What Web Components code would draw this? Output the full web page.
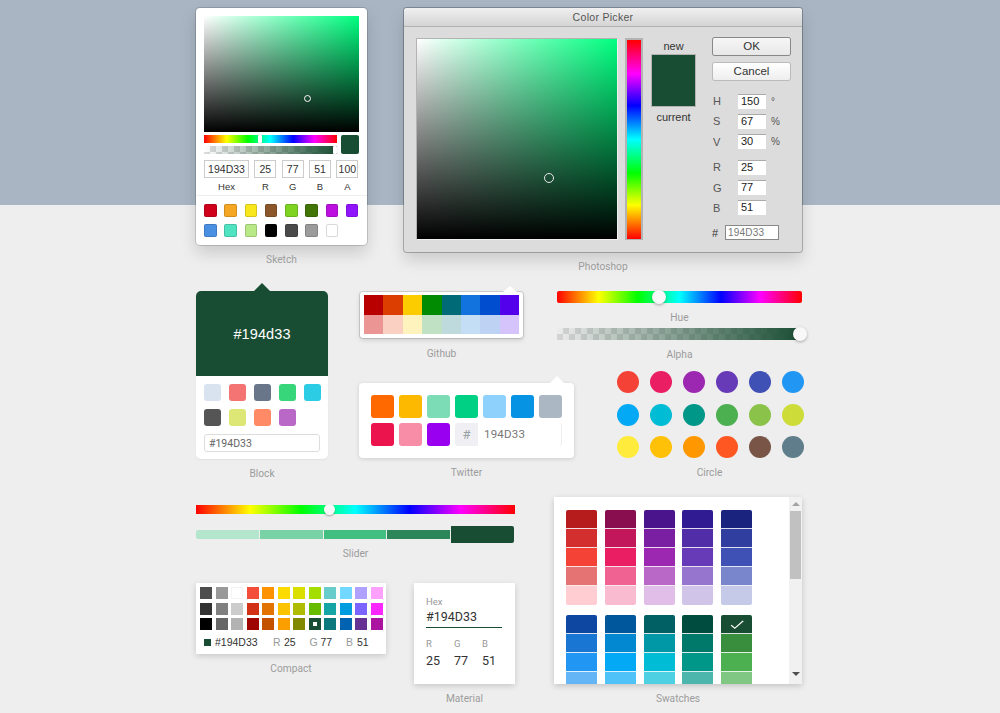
<!DOCTYPE html>
<html><head><meta charset="utf-8"><style>html,body{margin:0;padding:0}</style></head><body>
<cp-page></cp-page>
<script>
const hueH='linear-gradient(to right,#f00 0%,#ff0 17%,#0f0 33%,#0ff 50%,#00f 67%,#f0f 83%,#f00 100%)';
const hueV='linear-gradient(to top,#f00 0%,#ff0 17%,#0f0 33%,#0ff 50%,#00f 67%,#f0f 83%,#f00 100%)';
const sat='linear-gradient(to top,#000,rgba(0,0,0,0)),linear-gradient(to right,#fff,rgba(255,255,255,0)),#00ff80';
const check=(a,b,s)=>`repeating-conic-gradient(${a} 0 25%,${b} 0 50%) 0 0/${s}px ${s}px`;
function def(name,css,html){
  customElements.define(name,class extends HTMLElement{
    constructor(){super();const r=this.attachShadow({mode:'open'});
      r.innerHTML=`<style>${css}</style>`+(typeof html==='function'?html(this):html);}
  });
}
const cells=(arr,cls='c')=>arr.map(c=>`<i class="${cls}" style="background:${c}"></i>`).join('');

def('cp-demo',`:host{display:flex;flex-direction:column;align-items:center;width:max-content}
 .l{margin-top:var(--m,9px);height:12px;font:400 10.2px/12px Roboto,"Liberation Sans",sans-serif;color:#9c9c9c;white-space:nowrap}`,
 el=>`<slot></slot><div class="l">${el.getAttribute('label')}</div>`);

def('cp-sketch',`:host{display:block;width:171px;height:237px;box-sizing:border-box;background:#fff;border-radius:4px;padding:8px 8px 0;box-shadow:0 0 0 1px rgba(0,0,0,.15),0 8px 16px rgba(0,0,0,.15);font-family:"Liberation Sans",Arial,sans-serif}
 .sat{height:116px;background:${sat};position:relative}
 .cur{position:absolute;left:100px;top:79px;width:5px;height:5px;border-radius:50%;border:1px solid #fff;box-shadow:0 0 1px rgba(0,0,0,.6)}
 .ctl{display:flex;gap:4px;margin-top:3px}
 .bars{width:133px;display:flex;flex-direction:column;gap:3px}
 .b{height:8px;position:relative}
 .h{background:${hueH}}
 .a{background:linear-gradient(to right,rgba(25,77,51,0),#194d33),${check('#dcdcdc','#fff',12)}}
 .p{position:absolute;top:0;width:4px;height:8px;background:#fff;border-radius:1px;box-shadow:0 0 1px rgba(0,0,0,.4)}
 .box{width:18px;height:19px;background:#194d33;border-radius:2px}
 .flds{display:grid;grid-template-columns:45px 22px 22px 22px 22px;column-gap:5.33px;margin-top:6px;text-align:center}
 .f{height:18px;line-height:19px;font-size:10.5px;color:#333;box-shadow:inset 0 0 0 1px #ccc;overflow:hidden}
 .n{font-size:9.5px;line-height:11px;margin-top:3px;color:#333}
 hr{border:0;border-top:1px solid #eee;margin:3px -8px 0}
 .sw{display:grid;grid-template-columns:repeat(8,12.5px);column-gap:7.75px;row-gap:7.5px;padding-top:8px}
 .c{display:block;height:12.5px;border-radius:2px;box-shadow:inset 0 0 0 1px rgba(0,0,0,.15)}`,
 `<div class="sat"><div class="cur"></div></div>
 <div class="ctl"><div class="bars"><div class="b h"><div class="p" style="left:54px"></div></div><div class="b a"><div class="p" style="left:129px"></div></div></div><div class="box"></div></div>
 <div class="flds"><div class="f">194D33</div><div class="f">25</div><div class="f">77</div><div class="f">51</div><div class="f">100</div>
 <div class="n">Hex</div><div class="n">R</div><div class="n">G</div><div class="n">B</div><div class="n">A</div></div>
 <hr><div class="sw">${cells(['#D0021B','#F5A623','#F8E71C','#8B572A','#7ED321','#417505','#BD10E0','#9013FE','#4A90E2','#50E3C2','#B8E986','#000000','#4A4A4A','#9B9B9B','#FFFFFF'])}</div>`);

def('cp-photoshop',`:host{display:block;width:398px;height:244px;box-sizing:border-box;background:#dcdcdc;border-radius:3px;box-shadow:0 0 0 1px rgba(0,0,0,.25),0 8px 16px rgba(0,0,0,.15);font-family:"Liberation Sans",Arial,sans-serif;color:#333}
 .t{height:18px;line-height:18px;text-align:center;font-size:10.5px;color:#555;letter-spacing:.3px;background:linear-gradient(#f0f0f0,#d4d4d4);border-bottom:1px solid #b1b1b1;border-radius:3px 3px 0 0}
 .m{display:flex;padding:11px 0 0 12px}
 .sat{width:200px;height:200px;border:1px solid #b3b3b3;border-bottom-color:#f0f0f0;border-right-color:#f0f0f0;background:${sat};position:relative}
 .cur{position:absolute;left:127px;top:134px;width:8px;height:8px;border-radius:50%;border:1px solid #e8e8e8}
 .hue{width:14px;height:199px;border:2px solid #b3b3b3;border-bottom-width:1px;margin-left:7px;background:${hueV}}
 .prev{width:45px;margin-left:8px;text-align:center;font-size:11px;line-height:13px;padding-top:2px}
 .prev div{height:53px;background:#194d33;margin:1px 0 4px;border:1px solid #b3b3b3;box-sizing:border-box}
 .prev span{display:block;margin:0 -10px}
 .r{width:79px;margin-left:16px;font-size:11px}
 .btn{height:17px;line-height:16px;box-sizing:border-box;text-align:center;font-size:11.5px;background:linear-gradient(#f6f6f6,#e8e8e8);border-radius:2px;box-shadow:0 0 0 1px #888;margin:0 0 8px 1px;width:77px}
 .btn.c{box-shadow:0 0 0 1px #bbb;background:linear-gradient(#fff,#eee);margin-bottom:13.5px}
 .row{display:flex;align-items:center;height:15px;margin-bottom:5.4px;color:#555}
 .row b{font-weight:400;width:26px;padding-left:1px;box-sizing:border-box}
 .row span{width:28px;height:15px;line-height:15px;background:#fff;padding-left:3px;box-sizing:border-box;color:#222;box-shadow:0 1px 0 #aaa inset}
 .row em{font-style:normal;margin-left:5px;font-size:10px}
 .sep{height:5px}
 .hex{margin-top:10px;display:flex;align-items:center;height:15px}
 .hex b{font-weight:400;width:13px}
 .hex span{width:54px;height:15px;line-height:14px;background:#fff;border:1px solid #888;box-sizing:border-box;padding-left:2px;font-size:10px;color:#777;letter-spacing:.2px}`,
 `<div class="t">Color Picker</div><div class="m"><div class="sat"><div class="cur"></div></div><div class="hue"></div>
 <div class="prev">new<div></div><span>current</span></div>
 <div class="r"><div class="btn">OK</div><div class="btn c">Cancel</div>
 <div class="row"><b>H</b><span>150</span><em>°</em></div><div class="row"><b>S</b><span>67</span><em>%</em></div><div class="row"><b>V</b><span>30</span><em>%</em></div><div class="sep"></div>
 <div class="row"><b>R</b><span>25</span></div><div class="row"><b>G</b><span>77</span></div><div class="row"><b>B</b><span>51</span></div>
 <div class="hex"><b>#</b><span>194D33</span></div></div></div>`);

def('cp-block',`:host{display:block;width:132px;height:168px;background:#fff;border-radius:5px;position:relative;box-shadow:0 1px 2px rgba(0,0,0,.06);font-family:Roboto,"Liberation Sans",sans-serif}
 .ar{position:absolute;left:58px;top:-8px;width:0;height:0;border:8px solid transparent;border-top:0;border-bottom-color:#194d33}
 .h{height:85px;background:#194d33;border-radius:5px 5px 0 0;color:#fff;font:400 14.5px/86px "Liberation Sans",Arial,sans-serif;text-align:center;letter-spacing:.1px}
 .b{padding:8px}
 .sw{display:grid;grid-template-columns:repeat(5,17px);column-gap:8px;row-gap:8px}
 .c{display:block;height:17px;border-radius:3px}
 .i{margin-top:8px;height:18px;box-sizing:border-box;border:1px solid #ddd;border-radius:3px;font-size:10.5px;line-height:17px;padding-left:4px;color:#666}`,
 `<div class="ar"></div><div class="h">#194d33</div><div class="b"><div class="sw">${cells(['#D9E3F0','#F47373','#697689','#37D67A','#2CCCE4','#555555','#dce775','#ff8a65','#ba68c8'])}</div><div class="i">#194D33</div></div>`);

def('cp-github',`:host{display:block;width:163px;height:46px;box-sizing:border-box;background:#fff;border-radius:3px;padding:3px 4px;position:relative;box-shadow:0 0 0 1px rgba(0,0,0,.12),0 2px 5px rgba(0,0,0,.15)}
 .ar{position:absolute;left:143px;top:-6px;width:0;height:0;border:7px solid transparent;border-top:0;border-bottom:6px solid #fff}
 .g{display:grid;grid-template-columns:repeat(8,1fr);grid-template-rows:20px 19px;height:39px}
 .c{display:block}`,
 `<div class="ar"></div><div class="g">${cells(['#B80000','#DB3E00','#FCCB00','#008B02','#006B76','#1273DE','#004DCF','#5300EB','#EB9694','#FAD0C3','#FEF3BD','#C1E1C5','#BEDADC','#C4DEF6','#BED3F3','#D4C4FB'])}</div>`);

def('cp-twitter',`:host{display:block;width:215px;height:75px;box-sizing:border-box;background:#fff;border-radius:4px;padding:12px;position:relative;box-shadow:0 1px 4px rgba(0,0,0,.14);font-family:Roboto,"Liberation Sans",sans-serif}
 .ar{position:absolute;left:191px;top:-7px;width:0;height:0;border:7px solid transparent;border-top:0;border-bottom:7px solid #fff}
 .g{display:grid;grid-template-columns:repeat(7,23px);grid-auto-rows:23px;gap:5px}
 .c{display:block;border-radius:3px}
 .hash{background:#f0f0f4;border-radius:3px 0 0 3px;color:#98a1a4;text-align:center;font:400 13px/23px Roboto,sans-serif}
 .inp{grid-column:span 3;margin-left:-5px;padding-left:6px;line-height:22px;font-size:11.5px;color:#777;letter-spacing:.2px;box-shadow:inset -1px 0 0 #eee;border-radius:0 3px 3px 0}`,
 `<div class="ar"></div><div class="g">${cells(['#FF6900','#FCB900','#7BDCB5','#00D084','#8ED1FC','#0693E3','#ABB8C3','#EB144C','#F78DA7','#9900EF'])}<div class="hash">#</div><div class="inp">194D33</div></div>`);

def('cp-hue',`:host{display:block;width:245px;height:12px;border-radius:2px;background:${hueH};position:relative}
 .p{position:absolute;left:95px;top:-1px;width:14px;height:14px;border-radius:50%;background:#f8f8f8;box-shadow:0 1px 3px rgba(0,0,0,.3)}`,`<div class="p"></div>`);
def('cp-alpha',`:host{display:block;width:245px;height:12px;position:relative;background:linear-gradient(to right,rgba(25,77,51,0),#194d33),${check('#d4d4d4','#ececec',12)}}
 .p{position:absolute;left:236px;top:-1px;width:14px;height:14px;border-radius:50%;background:#f8f8f8;box-shadow:0 1px 3px rgba(0,0,0,.3)}`,`<div class="p"></div>`);

def('cp-circle',`:host{display:grid;width:185px;grid-template-columns:repeat(6,22px);grid-auto-rows:22px;column-gap:11px;row-gap:10.5px}
 .c{display:block;border-radius:50%}`,
 cells(['#F44336','#E91E63','#9C27B0','#673AB7','#3F51B5','#2196F3','#03A9F4','#00BCD4','#009688','#4CAF50','#8BC34A','#CDDC39','#FFEB3B','#FFC107','#FF9800','#FF5722','#795548','#607D8B']));

def('cp-slider',`:host{display:block;width:319px}
 .h{height:9px;background:${hueH};position:relative}
 .p{position:absolute;left:128px;top:-1px;width:11px;height:11px;border-radius:50%;background:#f8f8f8;box-shadow:0 1px 2px rgba(0,0,0,.3)}
 .s{display:flex;align-items:center;gap:1px;margin-top:12px;height:17px;width:318px}
 .s i{display:block;height:9px;flex:1}
 .s i:first-child{border-radius:2px 0 0 2px}
 .s i:last-child{height:17px;border-radius:0 2px 2px 0}`,
 `<div class="h"><div class="p"></div></div><div class="s"><i style="background:#b3e6cc"></i><i style="background:#79d2a6"></i><i style="background:#40bf80"></i><i style="background:#2d8659"></i><i style="background:#194d33"></i></div>`);

def('cp-compact',`:host{display:block;width:190px;height:71px;box-sizing:border-box;background:#fff;border-radius:1px;padding:4px 0 0 4px;box-shadow:0 2px 6px rgba(0,0,0,.16);font-family:"Liberation Sans",Arial,sans-serif}
 .g{display:grid;grid-template-columns:repeat(12,12px);grid-auto-rows:12px;column-gap:3.5px;row-gap:3.5px}
 .c{display:block;position:relative}
 .w{box-shadow:inset 0 0 0 1px #f4f4f4}
 .d{position:absolute;left:4px;top:4px;width:4px;height:4px;background:#fff}
 .f{display:flex;align-items:center;height:12px;margin-top:6px;padding-left:4px;font-size:10.5px;color:#333;white-space:nowrap}
 .f i{display:block;width:7px;height:7px;background:#194d33;margin-right:4px}
 .f b{font-weight:400;color:#999}
 .v{width:58px}.w2{width:36.5px}
 .f .x{display:inline-block;width:11px}`,
 `<div class="g">${['#4D4D4D','#999999','#FFFFFF','#F44E3B','#FE9200','#FCDC00','#DBDF00','#A4DD00','#68CCCA','#73D8FF','#AEA1FF','#FDA1FF','#333333','#808080','#cccccc','#D33115','#E27300','#FCC400','#B0BC00','#68BC00','#16A5A5','#009CE0','#7B64FF','#FA28FF','#000000','#666666','#B3B3B3','#9F0500','#C45100','#FB9E00','#808900','#194D33','#0C797D','#0062B1','#653294','#AB149E'].map(c=>`<i class="c${c==='#FFFFFF'?' w':''}" style="background:${c}">${c==='#194D33'?'<span class="d"></span>':''}</i>`).join('')}</div>
 <div class="f"><i></i><span class="v">#194D33</span><span class="w2"><b class="x">R</b>25</span><span class="w2"><b class="x">G</b>77</span><span class="w2"><b class="x">B</b>51</span></div>`);

def('cp-material',`:host{display:block;width:101px;height:101px;box-sizing:border-box;background:#fff;padding:13px 12px 0;box-shadow:0 2px 6px rgba(0,0,0,.16);font-family:Roboto,"Liberation Sans",sans-serif}
 .l{font-size:9.5px;line-height:11px;color:#999}
 .v{font-size:12.5px;line-height:15px;color:#333}
 .u{width:76px;border-bottom:1px solid #194d33;padding:2px 0 3px;margin-bottom:10px}
 .g{display:grid;grid-template-columns:28px 28px 28px}`,
 `<div class="l">Hex</div><div class="v u">#194D33</div><div class="g"><div class="l">R</div><div class="l">G</div><div class="l">B</div><div class="v" style="margin-top:4px">25</div><div class="v" style="margin-top:4px">77</div><div class="v" style="margin-top:4px">51</div></div>`);

const groups=[['#b71c1c','#d32f2f','#f44336','#e57373','#ffcdd2'],['#880e4f','#c2185b','#e91e63','#f06292','#f8bbd0'],['#4a148c','#7b1fa2','#9c27b0','#ba68c8','#e1bee7'],['#311b92','#512da8','#673ab7','#9575cd','#d1c4e9'],['#1a237e','#303f9f','#3f51b5','#7986cb','#c5cae9'],
['#0d47a1','#1976d2','#2196f3','#64b5f6','#bbdefb'],['#01579b','#0288d1','#03a9f4','#4fc3f7','#b3e5fc'],['#006064','#0097a7','#00bcd4','#4dd0e1','#b2ebf2'],['#004d40','#00796b','#009688','#4db6ac','#b2dfdb'],['#194D33','#388e3c','#4caf50','#81c784','#c8e6c9']];
def('cp-swatches',`:host{display:flex;width:248px;height:187px;background:#fff;overflow:hidden;box-shadow:0 2px 6px rgba(0,0,0,.18)}
 .m{width:235px;height:187px;overflow:hidden;box-sizing:border-box;padding:13px 0 0 12px}
 .g{display:grid;grid-template-columns:repeat(5,31px);column-gap:7.8px;row-gap:10px}
 .col{border-radius:2px;overflow:hidden}
 .col i{display:flex;align-items:center;justify-content:center;height:19px;box-shadow:inset 0 -1px 0 rgba(255,255,255,.85)}
 .col i:last-child{box-shadow:none}
 .sb{width:13px;background:#f1f1f1;position:relative;display:flex;flex-direction:column;align-items:center}
 .up,.dn{width:0;height:0;border:4px solid transparent}
 .up{border-top:0;border-bottom:4px solid #a3a3a3;margin-top:5px}
 .th{width:11px;height:68px;background:#c1c1c1;margin-top:5px}
 .dn{border-bottom:0;border-top:4px solid #505050;margin-top:93px}`,
 `<div class="m"><div class="g">${groups.map((g,gi)=>`<div class="col">${g.map((c,i)=>`<i style="background:${c}">${gi===9&&i===0?'<svg width="18" height="14" viewBox="0 0 24 24" preserveAspectRatio="none"><path d="M21 5.5L9 19l-5.5-6 1.4-1.4L9 16.2 19.6 4.1z" fill="#fff"/></svg>':''}</i>`).join('')}</div>`).join('')}</div></div><div class="sb"><div class="up"></div><div class="th"></div><div class="dn"></div></div>`);

def('cp-page',`:host{display:block;width:1000px;height:713px;overflow:hidden;box-sizing:border-box;padding:8px 0 0 196px;background:linear-gradient(#a9b5c3 205px,#eeeeee 205px)}
 .r{display:flex;align-items:flex-start}
 .c{display:flex;flex-direction:column;align-items:flex-start}`,
 `<div class="r"><cp-demo label="Sketch"><cp-sketch></cp-sketch></cp-demo><cp-demo label="Photoshop" style="margin-left:37px"><cp-photoshop></cp-photoshop></cp-demo></div>
 <div class="r" style="margin-top:18px">
  <cp-demo label="Block"><cp-block></cp-block></cp-demo>
  <div class="c" style="margin-left:31px;width:198px"><cp-demo label="Github" style="margin:1px 0 0 1px;--m:10px"><cp-github></cp-github></cp-demo><cp-demo label="Twitter" style="margin-top:23px"><cp-twitter></cp-twitter></cp-demo></div>
  <div class="c" style="width:245px"><cp-demo label="Hue"><cp-hue></cp-hue></cp-demo><cp-demo label="Alpha" style="margin-top:4px"><cp-alpha></cp-alpha></cp-demo><cp-demo label="Circle" style="margin:10px 0 0 60px"><cp-circle></cp-circle></cp-demo></div>
 </div>
 <div class="r" style="margin-top:17px">
  <div class="c" style="width:358px;padding-top:8px"><cp-demo label="Slider" style="--m:5px"><cp-slider></cp-slider></cp-demo>
   <div class="r" style="margin-top:23px"><cp-demo label="Compact"><cp-compact></cp-compact></cp-demo><cp-demo label="Material" style="margin-left:28px"><cp-material></cp-material></cp-demo></div></div>
  <cp-demo label="Swatches"><cp-swatches></cp-swatches></cp-demo>
 </div>`);
</script>
</body></html>
